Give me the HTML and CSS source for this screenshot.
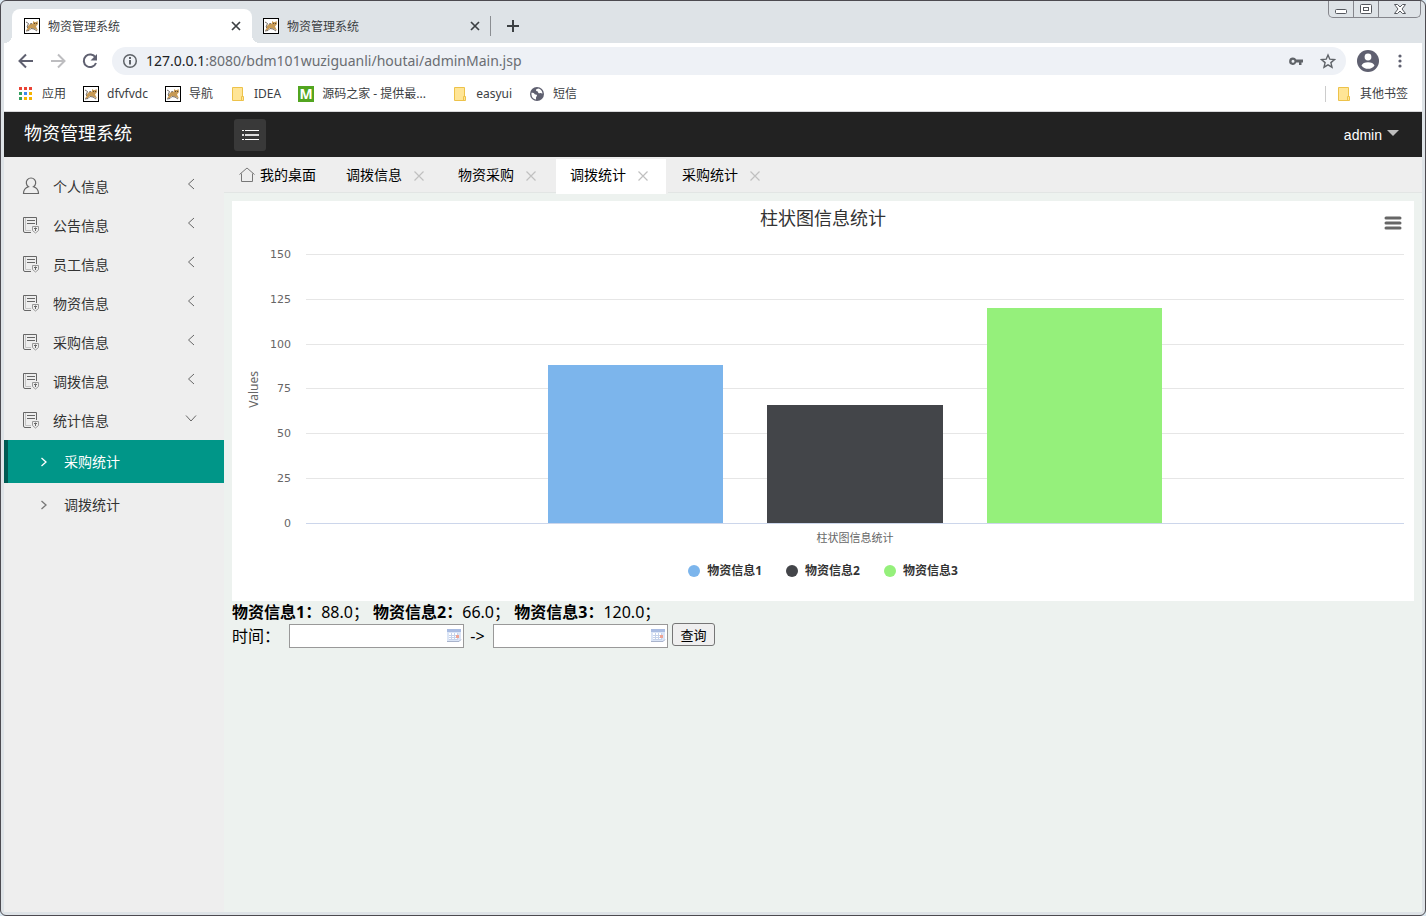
FILE: index.html
```html
<!DOCTYPE html>
<html lang="zh-CN">
<head>
<meta charset="utf-8">
<title>物资管理系统</title>
<link rel="stylesheet" href="styles.css">
</head>
<body>
<svg class="sprites" aria-hidden="true">
  <symbol id="cat" viewBox="0 0 16 16">
    <path d="M0 0h16v16H0z" fill="#000"/><path d="M1 1h14v14H1z" fill="#fff"/>
    <path d="M3 9l3-3 3-.5L9 3l1.500 1L12 4l1.500-1 .5 3-2 2.500 2 4-3-1.500-4-1-3 2.500H2l2-3z" fill="#c79a55"/>
    <path d="M2 4l2.500 1.500L3 9l1 1M6 6l2-.5M2 13l3-.5 2-2 3 .5 3 2" fill="none" stroke="#77706a"/>
    <path d="M10 5h1v1h-1zM12 5h1v1h-1z" fill="#5a4630"/>
  </symbol>
  <symbol id="folder" viewBox="0 0 16 16">
    <path d="M2.500 1.500h10v9h1v4h-11z" fill="#ffe596" stroke="#edc24a"/><path d="M11.500 14v-3.500h1.500" fill="none" stroke="#edc24a"/>
  </symbol>
  <symbol id="cross" viewBox="0 0 12 12"><path d="M1.500 1.500l9 9M10.500 1.500l-9 9" fill="none" stroke="currentColor" stroke-width="1.200"/></symbol>
  <symbol id="left" viewBox="0 0 12 12"><path d="M9 1L3.500 6 9 11" fill="none" stroke="currentColor"/></symbol>
  <symbol id="down" viewBox="0 0 12 12"><path d="M1 3.500L6 9l5-5.500" fill="none" stroke="currentColor"/></symbol>
  <symbol id="right" viewBox="0 0 12 12"><path d="M3.500 2l4.500 4-4.500 4" fill="none" stroke="currentColor" stroke-width="1.300"/></symbol>
  <symbol id="doc" viewBox="0 0 18 18">
    <path d="M9 16.500H3Q1.500 16.500 1.500 15V1.500h13V9" fill="none" stroke="#666"/>
    <path d="M3.500 2v12.500H9" fill="none" stroke="#c4c4c4"/>
    <path d="M5 4.500h8M5 7.500h8" fill="none" stroke="#666"/>
    <path d="M10.500 10.500h6v4l-3 2.500-3-2.500z" fill="none" stroke="#999"/>
    <path d="M12 12.500h3M13.500 11.500V15" fill="none" stroke="#666"/>
  </symbol>
  <symbol id="cal" viewBox="0 0 16 16">
    <path d="M1 2h14v11l-2 2H1z" fill="#dbe5f6"/><path d="M1 2h14v3H1z" fill="#a9bce2"/>
    <path d="M1 14.500h12l2-2" fill="none" stroke="#a9b4cc"/><path d="M3 6h9v7H3z" fill="#fff"/>
    <path d="M3 8.500h10M3 10.500h10M3 12.500h8M5.500 6v7M8.500 6v7M11.500 6v7" stroke="#c5d2ea" fill="none"/>
    <path d="M10 8h3v3h-3z" fill="#eda394"/>
  </symbol>
</svg>
<div class="window">
  <div class="tabstrip">
    <div class="btab btab-on"><svg class="i16"><use href="#cat"/></svg><span class="btab-name">物资管理系统</span><button class="plain btab-x" aria-label="关闭标签页"><svg viewBox="0 0 12 12"><path d="M2 2l8 8M10 2l-8 8" stroke="#3c4043" stroke-width="1.700"/></svg></button></div>
    <div class="btab"><svg class="i16"><use href="#cat"/></svg><span class="btab-name">物资管理系统</span><button class="plain btab-x" aria-label="关闭标签页"><svg viewBox="0 0 12 12"><path d="M2 2l8 8M10 2l-8 8" stroke="#3c4043" stroke-width="1.700"/></svg></button></div>
    <button class="plain newtab" aria-label="新标签页"><svg class="i14" viewBox="0 0 14 14"><path d="M7 1v12M1 7h12" stroke="#3c4043" stroke-width="2"/></svg></button>
    <div class="wincontrols">
      <button aria-label="最小化"><svg viewBox="0 0 14 12"><rect x="1.500" y="6.500" width="11" height="4" rx="1" fill="#fff" stroke="#55585e"/></svg></button>
      <button aria-label="最大化"><svg viewBox="0 0 14 12"><rect x="1.500" y="1.500" width="11" height="9" rx="1" fill="#fff" stroke="#55585e"/><rect x="4.500" y="4.500" width="5" height="3" fill="#fff" stroke="#55585e"/></svg></button>
      <button class="winclose" aria-label="关闭"><svg viewBox="0 0 14 12"><path d="M1.500 1.500h3L7 4l2.500-2.500h3L9 6l3.500 4.500h-3L7 8l-2.500 2.500h-3L5 6z" fill="#fff" stroke="#55585e"/></svg></button>
    </div>
  </div>
  <div class="toolbar">
    <button class="plain tool" aria-label="后退"><svg class="i16" viewBox="0 0 16 16"><path d="M15 8H2M8 1.500L1.500 8 8 14.500" fill="none" stroke="#5f6070" stroke-width="2"/></svg></button>
    <button class="plain tool" aria-label="前进"><svg class="i16" viewBox="0 0 16 16"><path d="M1 8h13M8 1.500L14.500 8 8 14.500" fill="none" stroke="#bdbdc0" stroke-width="2"/></svg></button>
    <button class="plain tool" aria-label="刷新"><svg class="i16" viewBox="0 0 16 16"><path d="M13.500 4.500A6.300 6.300 0 1 0 14 10" fill="none" stroke="#5f6070" stroke-width="2"/><path d="M15 1v6.500H8.500z" fill="#5f6070"/></svg></button>
    <div class="omnibox">
      <svg class="i16" viewBox="0 0 16 16"><circle cx="8" cy="8" r="6.300" fill="none" stroke="#5f6368" stroke-width="1.500"/><path d="M8 7v4.500M8 4v2" stroke="#5f6368" stroke-width="2"/></svg>
      <div class="url" role="textbox" aria-label="地址" contenteditable="true"><span class="host">127.0.0.1</span>:8080/bdm101wuziguanli/houtai/adminMain.jsp</div>
      <button class="plain tool" aria-label="密码"><svg class="i16" viewBox="0 0 16 16"><path d="M5 4.500a3.700 3.700 0 1 0 3.300 5H11v2.500h2.500V9.500H15v-3H8.300A3.700 3.700 0 0 0 5 4.500zm0 2.200a1.500 1.500 0 1 1 0 3 1.500 1.500 0 0 1 0-3z" fill="#5f6368" fill-rule="evenodd"/></svg></button>
      <button class="plain tool" aria-label="收藏"><svg class="i16" viewBox="0 0 16 16"><path d="M8 2l1.800 4.200 4.700.4-3.600 3 1.100 4.600L8 11.800l-4 2.400 1.100-4.600-3.600-3 4.700-.4z" fill="none" stroke="#5f6368" stroke-width="1.400"/></svg></button>
    </div>
    <button class="plain tool" aria-label="用户"><svg class="i22" viewBox="0 0 22 22"><circle cx="11" cy="11" r="11" fill="#5f6070"/><circle cx="11" cy="7" r="3.400" fill="#fff"/><path d="M4.500 15.500c1-4.500 12-4.500 13 0a8 8 0 0 1-13 0z" fill="#fff"/></svg></button>
    <button class="plain tool" aria-label="菜单"><svg class="i16" viewBox="0 0 16 16"><g fill="#5f6070"><circle cx="8" cy="3" r="1.600"/><circle cx="8" cy="8" r="1.600"/><circle cx="8" cy="13" r="1.600"/></g></svg></button>
  </div>
  <nav class="bookmarks">
    <a href="#"><svg class="i16" viewBox="0 0 16 16"><path d="M1 1h3v3H1zM6 1h3v3H6zM11 1h3v3h-3z" fill="#ea4335"/><path d="M1 6h3v3H1zM1 11h3v3H1z" fill="#34a060"/><path d="M6 6h3v3H6z" fill="#3b8af0"/><path d="M11 6h3v3h-3zM6 11h3v3H6zM11 11h3v3h-3z" fill="#f5b400"/></svg>应用</a>
    <a href="#"><svg class="i16"><use href="#cat"/></svg>dfvfvdc</a>
    <a href="#"><svg class="i16"><use href="#cat"/></svg>导航</a>
    <a href="#"><svg class="i16"><use href="#folder"/></svg>IDEA</a>
    <a href="#"><span class="mark">M</span><span class="longname">源码之家 - 提供最...</span></a>
    <a href="#"><svg class="i16"><use href="#folder"/></svg>easyui</a>
    <a href="#"><svg class="i16" viewBox="0 0 16 16"><circle cx="8" cy="8" r="7" fill="#5f6070"/><path d="M2.500 6.800c1.500 0 2.500.2 3 1.200.4.800 2.500.3 2.500 1.500 0 1-1 1.200-1 2v2C4 13.200 2 10.500 2.500 6.800zM9 2.500c-1 .5-2.500 1-2 2 .4.800 2 .5 2 1.500s1 1.500 2 1.200 1.800.3 2.300.8c.4-2-.8-4.500-3-5.300z" fill="#fff"/></svg>短信</a>
    <a href="#" class="other"><svg class="i16"><use href="#folder"/></svg>其他书签</a>
  </nav>

  <header class="header">
    <h1 class="brand">物资管理系统</h1>
    <button class="plain toggle" aria-label="折叠菜单"><svg viewBox="0 0 18 12"><path d="M4 1.500h14M4 10.500h14M1 1.500h2M1 10.500h2" stroke="#fff"/><path d="M4 6h14M1 6h2" stroke="#ddd" stroke-width="2"/></svg></button>
    <button class="plain user">admin<i class="caret"></i></button>
  </header>
  <div class="page">
    <nav class="side">
      <a href="#" class="item"><svg class="i18" viewBox="0 0 18 18"><path d="M6.500 9.700a4.700 4.700 0 1 1 5 0C14 10.500 16.500 12.500 16.500 16.500h-15c0-4 2.500-6 5-6.800z" fill="none" stroke="#666" stroke-width="1.200"/></svg><span>个人信息</span><svg class="fold"><use href="#left"/></svg></a>
      <a href="#" class="item"><svg class="i18"><use href="#doc"/></svg><span>公告信息</span><svg class="fold"><use href="#left"/></svg></a>
      <a href="#" class="item"><svg class="i18"><use href="#doc"/></svg><span>员工信息</span><svg class="fold"><use href="#left"/></svg></a>
      <a href="#" class="item"><svg class="i18"><use href="#doc"/></svg><span>物资信息</span><svg class="fold"><use href="#left"/></svg></a>
      <a href="#" class="item"><svg class="i18"><use href="#doc"/></svg><span>采购信息</span><svg class="fold"><use href="#left"/></svg></a>
      <a href="#" class="item"><svg class="i18"><use href="#doc"/></svg><span>调拨信息</span><svg class="fold"><use href="#left"/></svg></a>
      <a href="#" class="item"><svg class="i18"><use href="#doc"/></svg><span>统计信息</span><svg class="fold"><use href="#down"/></svg></a>
      <a href="#" class="sub sub-on"><svg class="i12"><use href="#right"/></svg>采购统计</a>
      <a href="#" class="sub"><svg class="i12"><use href="#right"/></svg>调拨统计</a>
    </nav>
    <div class="content">
      <div class="tabs">
        <a href="#" class="tab home"><svg class="i16" viewBox="0 0 16 16"><path d="M.500 7.500L8 1l7.500 6.500M2.500 6.500v8h11v-8" fill="none" stroke="#777"/></svg>我的桌面</a>
        <div class="tab"><a href="#">调拨信息</a><button class="plain tab-x" aria-label="关闭"><svg class="i12"><use href="#cross"/></svg></button></div>
        <div class="tab"><a href="#">物资采购</a><button class="plain tab-x" aria-label="关闭"><svg class="i12"><use href="#cross"/></svg></button></div>
        <div class="tab tab-on"><a href="#">调拨统计</a><button class="plain tab-x" aria-label="关闭"><svg class="i12"><use href="#cross"/></svg></button></div>
        <div class="tab"><a href="#">采购统计</a><button class="plain tab-x" aria-label="关闭"><svg class="i12"><use href="#cross"/></svg></button></div>
      </div>
      <main class="main">
        <section class="chart">
          <h2 class="chart-title">柱状图信息统计</h2>
          <button class="plain chart-menu" aria-label="图表菜单"><svg viewBox="0 0 18 14"><path d="M2 2h14M2 7h14M2 12h14" stroke="#666" stroke-width="3" stroke-linecap="round"/></svg></button>
          <div class="chart-body">
            <div class="axis-title">Values</div>
            <div class="ylabels"><span>150</span><span>125</span><span>100</span><span>75</span><span>50</span><span>25</span><span>0</span></div>
            <div class="plot">
              <div class="grid"><i></i><i></i><i></i><i></i><i></i><i></i></div>
              <div class="bars">
                <div class="bar blue" style="height:58.67%"></div>
                <div class="bar dark" style="height:44%"></div>
                <div class="bar green" style="height:80%"></div>
              </div>
            </div>
            <div class="xlabel">柱状图信息统计</div>
          </div>
          <div class="legend">
            <span><i class="dot blue"></i>物资信息1</span>
            <span><i class="dot dark"></i>物资信息2</span>
            <span><i class="dot green"></i>物资信息3</span>
          </div>
        </section>
        <p class="totals"><b>物资信息1<span class="punct">：</span></b>88.0<span class="punct">；</span> <b>物资信息2<span class="punct">：</span></b>66.0<span class="punct">；</span> <b>物资信息3<span class="punct">：</span></b>120.0<span class="punct">；</span></p>
        <form class="query">
          <label for="from">时间<span class="punct">：</span></label>
          <span class="date"><input id="from" type="text"><svg class="i16"><use href="#cal"/></svg></span>
          <label class="arrow" for="to">-&gt;</label>
          <span class="date"><input id="to" type="text"><svg class="i16"><use href="#cal"/></svg></span>
          <button type="button" class="search">查询</button>
        </form>
      </main>
    </div>
  </div>
</div>
</body>
</html>
```
FILE: styles.css
```css
* { box-sizing: border-box; }
body { margin: 0; background: #dce9f2; color: #333; font: 14px/20px "Noto Sans", "Noto Sans CJK SC", sans-serif; }
a { color: inherit; text-decoration: none; }
h1, h2, p { margin: 0; font-weight: normal; }
svg { display: block; flex: none; }
button, input { font: inherit; }
.plain { display: flex; align-items: center; justify-content: center; padding: 0; border: 0; background: none; color: inherit; }
.sprites { position: absolute; width: 0; height: 0; }
.i12 { width: 12px; height: 12px; }
.i14 { width: 14px; height: 14px; }
.i16 { width: 16px; height: 16px; }
.i18 { width: 18px; height: 18px; }
.i22 { width: 22px; height: 22px; }
.punct { font-family: "Noto Sans CJK TC", sans-serif; line-height: 1; }

.window { display: flex; flex-direction: column; min-height: 100vh; padding: 0 3px 3px; border: 1px solid #4c4a50; border-radius: 6px; background: #dee3e7; }

/* browser chrome */
.tabstrip { display: flex; align-items: flex-end; height: 42px; padding-left: 8px; font-size: 12px; }
.btab { position: relative; display: flex; align-items: center; width: 240px; height: 34px; padding: 0 10px 0 12px; gap: 8px; color: #3c4043; }
.btab + .btab { width: 238px; padding: 0 9px 0 11px; }
.btab-on { border-radius: 8px 8px 0 0; background: #fff; }
.btab-on::before, .btab-on::after { content: ""; position: absolute; bottom: 0; width: 8px; height: 8px; }
.btab-on::before { left: -8px; background: radial-gradient(circle at 0 0, transparent 8px, #fff 8px); }
.btab-on::after { right: -8px; background: radial-gradient(circle at 100% 0, transparent 8px, #fff 8px); }
.btab-name { flex: 1; padding-top: 2px; }
.btab-x { width: 12px; height: 12px; }
.btab-x svg { width: 12px; height: 12px; }
.newtab { width: 44px; height: 20px; margin-bottom: 7px; border-left: 1px solid #8b8e92; }
.wincontrols { display: flex; align-self: flex-start; height: 17px; margin: 0 1px 0 auto; border: 1px solid #85868c; border-top: 0; border-radius: 0 0 5px 5px; }
.wincontrols button { display: flex; align-items: center; justify-content: center; width: 25px; padding: 0; border: 0; border-right: 1px solid #85868c; background: none; }
.wincontrols .winclose { width: 41px; border: 0; }
.wincontrols svg { width: 14px; height: 12px; }
.toolbar { display: flex; align-items: center; height: 36px; padding: 0 6px; background: #fff; }
.tool { width: 32px; height: 28px; }
.omnibox { display: flex; flex: 1; align-items: center; height: 28px; margin: 0 6px; padding: 0 2px 0 10px; border-radius: 14px; background: #eef1f6; }
.url { flex: 1; margin-left: 8px; color: #6a6d72; }
.host { color: #202124; }
.bookmarks { display: flex; align-items: center; gap: 17px; height: 33px; padding: 0 14px 3px; border-bottom: 1px solid #d8d8da; background: #fff; color: #3c4043; font-size: 12px; }
.bookmarks a { display: flex; align-items: center; gap: 8px; white-space: nowrap; }
.mark { width: 16px; height: 16px; background: #52a520; color: #fff; font-weight: bold; font-size: 14px; line-height: 16px; text-align: center; }
.longname { width: 113px; }
.bookmarks .other { margin-left: auto; padding-left: 10px; border-left: 1px solid #ccc; line-height: 16px; }

/* application header */
.header { display: flex; align-items: center; height: 45px; background: #222; color: #fff; }
.brand { width: 220px; padding: 0 0 3px 20px; font-size: 18px; line-height: 40px; }
.toggle { width: 32px; height: 32px; margin-left: 10px; border-radius: 3px; background: #393939; }
.toggle svg { width: 18px; height: 12px; }
.user { gap: 5px; margin: 0 23px 0 auto; font-family: "Liberation Sans", sans-serif; }
.caret { margin-bottom: 4px; border: 6px solid transparent; border-top-color: #bdbdbd; border-bottom: 0; }

/* sidebar */
.page { display: flex; flex: 1; }
.side { width: 220px; padding-top: 10px; background: #eee; }
.item { display: flex; align-items: center; gap: 13px; height: 39px; padding: 0 27px 2px 18px; }
.item span { flex: 1; padding-top: 2px; }
.fold { width: 12px; height: 12px; margin-bottom: 4px; color: #666; }
.sub { display: flex; align-items: center; gap: 14px; height: 43px; padding-left: 30px; border-left: 4px solid transparent; }
.sub .i12 { color: #777; }
.sub-on { border-color: #005a52; background: #009688; color: #fff; }
.sub-on .i12 { color: #fff; }

/* page tabs */
.content { display: flex; flex: 1; flex-direction: column; background: #edf2ef; }
.tabs { display: flex; height: 36px; padding-top: 2px; border-bottom: 1px solid #e2e5e4; background: #eee; color: #000; }
.tab { display: flex; align-items: center; justify-content: space-between; width: 112px; height: 33px; padding: 0 19px 0 14px; }
.tab a, .home { padding-bottom: 2px; }
.home { width: 107px; margin-right: 1px; padding: 0 15px 2px; }
.tab-on { height: 35px; padding-bottom: 2px; border-right: 2px solid #eee; background: #fff; padding-right: 17px; }
.tab-x { width: 12px; height: 12px; color: #c0c0c0; }

/* chart */
.main { padding: 8px; color: #000; font-size: 16px; line-height: 22px; }
.chart { position: relative; min-height: 400px; background: #fff; color: #333; }
.chart-title { padding-top: 5px; font-size: 18px; line-height: 24px; text-align: center; }
.chart-menu { position: absolute; top: 15px; right: 12px; }
.chart-menu svg { width: 18px; height: 14px; }
.chart-body { display: grid; grid-template-columns: 30px 30px 1fr; grid-template-rows: 270px auto; padding: 24px 10px 0 14px; color: #666; font-family: "DejaVu Sans", "Noto Sans CJK SC", sans-serif; font-size: 11px; line-height: 20px; }
.axis-title { place-self: center start; font: 12px/16px "Noto Sans", sans-serif; writing-mode: vertical-rl; transform: rotate(180deg); }
.ylabels { display: flex; flex-direction: column; justify-content: space-between; align-items: flex-end; margin: -9px 15px -10px 0; }
.plot { display: grid; border-bottom: 1px solid #ccd6eb; }
.grid, .bars { grid-area: 1 / 1; }
.grid { display: flex; flex-direction: column; }
.grid i { flex: 1; border-top: 1px solid #e6e6e6; }
.bars { display: flex; align-items: flex-end; justify-content: center; gap: 4%; }
.bar { width: 16%; }
.blue { background: #7cb5ec; }
.dark { background: #434549; }
.green { background: #95f07b; }
.xlabel { grid-column: 3; padding-top: 5px; text-align: center; }
.legend { display: flex; justify-content: center; gap: 24px; padding-top: 11px; font: bold 12px/22px "Noto Sans", "Noto Sans CJK SC", sans-serif; }
.legend span { display: flex; align-items: center; gap: 7px; }
.dot { width: 12px; height: 12px; border-radius: 50%; }

/* totals and date query */
.query { display: flex; align-items: center; }
.query label { width: 57px; }
.query .arrow { width: 29px; padding-right: 2px; text-align: center; }
.date { position: relative; display: block; }
.date input { display: block; width: 175px; height: 24px; padding: 0 20px 0 4px; border: 1px solid #999; background: #fff; font-size: 13px; }
.date svg { position: absolute; top: 3px; right: 2px; }
.search { width: 43px; height: 23px; margin: 0 0 2px 4px; padding: 0; border: 1px solid #767676; border-radius: 3px; background: #efefef; color: #000; font-size: 13px; line-height: 20px; }
```
